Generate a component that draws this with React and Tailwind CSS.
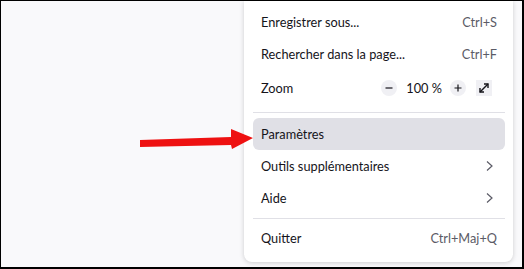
import React from "react";

const FONT = { fontFamily: 'Lato, "Noto Sans", sans-serif' };

function Chevron() {
  return (
    <svg width="16" height="16" viewBox="0 0 16 16" fill="none">
      <path d="M6 3.5l5 4.5-5 4.5" stroke="#5b5b66" strokeWidth="1.2" />
    </svg>
  );
}

function MenuRow({ label, shortcut, chevron, active }) {
  return (
    <div
      className={`flex items-center justify-between h-8 px-2 rounded-md ${
        active ? "bg-[#e0e0e6]" : ""
      }`}
    >
      <span className="pt-[2px] text-[#15141a]">{label}</span>
      {shortcut && <span className="pt-[2px] text-[#5b5b66]">{shortcut}</span>}
      {chevron && <Chevron />}
    </div>
  );
}

function Separator({ top, bottom }) {
  return <div className={`h-px bg-[#e0e0e6] ${top} ${bottom}`} />;
}

export default function App() {
  return (
    <div
      className="relative w-[524px] h-[269px] overflow-hidden bg-[#f9f9fb] border-t border-l border-r-2 border-b-2 border-black text-[12.75px]"
      style={FONT}
    >
      <div className="flex pl-[243px]">
        <div className="w-[269px] bg-white rounded-b-lg shadow-[0_1px_5px_rgba(0,0,0,0.18)] pt-[5px] pb-2 px-[9px] pr-2">
          <MenuRow label="Enregistrer sous..." shortcut="Ctrl+S" />
          <MenuRow label="Rechercher dans la page..." shortcut="Ctrl+F" />

          {/* Zoom row */}
          <div className="flex items-center justify-between h-9 pl-2 pr-[13px]">
            <span className="pt-[2px] text-[#15141a]">Zoom</span>
            <div className="flex items-center">
              <div className="w-4 h-4 rounded-full bg-[#f0f0f4] flex items-center justify-center">
                <svg width="10" height="10" viewBox="0 0 10 10">
                  <path d="M1.5 5h7" stroke="#15141a" strokeWidth="1.2" />
                </svg>
              </div>
              <span className="ml-[9px] mr-[8px] pt-[2px] text-[#15141a]">100 %</span>
              <div className="w-4 h-4 rounded-full bg-[#f0f0f4] flex items-center justify-center">
                <svg width="10" height="10" viewBox="0 0 10 10">
                  <path d="M1.5 5h7M5 1.5v7" stroke="#15141a" strokeWidth="1.2" />
                </svg>
              </div>
              <div className="ml-[10px] w-4 h-4 bg-[#f0f0f4] flex items-center justify-center">
                <svg width="12" height="12" viewBox="0 0 12 12" fill="none">
                  <path d="M2 10L10 2" stroke="#15141a" strokeWidth="1.4" />
                  <path d="M6 2h4v4" stroke="#15141a" strokeWidth="1.4" />
                  <path d="M2 6v4h4" stroke="#15141a" strokeWidth="1.4" />
                </svg>
              </div>
            </div>
          </div>

          <Separator top="mt-[6px]" bottom="mb-[5px]" />
          <MenuRow label="Paramètres" active />
          <MenuRow label="Outils supplémentaires" chevron />
          <MenuRow label="Aide" chevron />
          <Separator top="mt-1" bottom="mb-[3px]" />
          <MenuRow label="Quitter" shortcut="Ctrl+Maj+Q" />
        </div>
      </div>

      {/* Red annotation arrow */}
      <svg
        className="absolute left-[137px] top-[126px]"
        width="118"
        height="26"
        viewBox="0 0 118 26"
      >
        <polygon
          points="2,13 93,10 93,2 115,11 94,22 93,18 2,20"
          fill="#ee1111"
        />
      </svg>
    </div>
  );
}
